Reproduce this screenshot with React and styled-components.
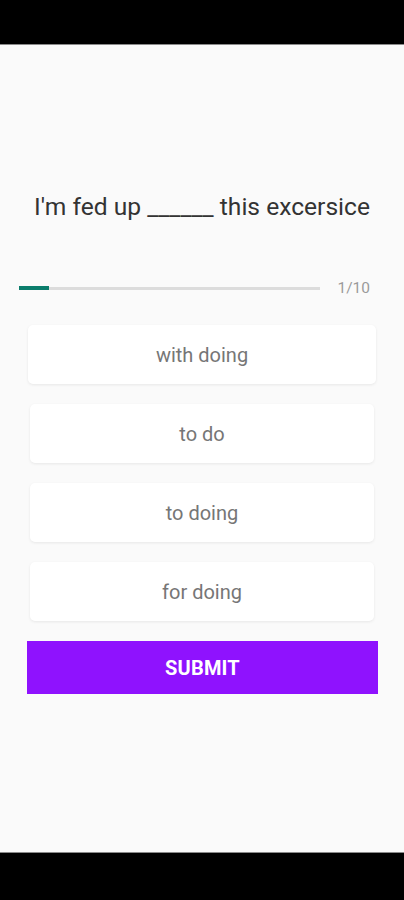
import React from "react";
import styled, { createGlobalStyle } from "styled-components";

const GlobalStyle = createGlobalStyle`
  html, body {
    margin: 0;
    padding: 0;
    background: #000;
  }
  * {
    box-sizing: border-box;
  }
`;

const Screen = styled.div`
  width: 404px;
  height: 900px;
  display: flex;
  flex-direction: column;
  font-family: Roboto, "Noto Sans", sans-serif;
  background: #000;
`;

const StatusBar = styled.div`
  height: 45px;
  background: #000;
  border-bottom: 1px solid #8a8a8a;
`;

const NavBar = styled.div`
  height: 48px;
  background: #000;
  border-top: 1px solid #8a8a8a;
`;

const Content = styled.div`
  flex: 1;
  background: #fafafa;
  display: flex;
  flex-direction: column;
  padding-top: 147px;
`;

const Question = styled.div`
  text-align: center;
  font-size: 24.6px;
  line-height: 30px;
  color: #333;
`;

const ProgressRow = styled.div`
  display: flex;
  align-items: center;
  margin-top: 57px;
  padding: 0 34px 0 19px;
`;

const Track = styled.div`
  flex: 1;
  height: 3px;
  background: #dcdcdc;
  position: relative;
  margin-right: 17px;
`;

const Fill = styled.div`
  position: absolute;
  left: 0;
  top: -1px;
  height: 4px;
  background: #0b7d6c;
`;

const Counter = styled.span`
  font-size: 15.5px;
  color: #9a9a9a;
`;

const Options = styled.div`
  display: flex;
  flex-direction: column;
  gap: 20px;
  margin-top: 28px;
  padding: 0 30px;
`;

const Option = styled.div`
  height: 59px;
  margin: 0 ${(p) => (p.$raised ? "-2px" : "0")};
  background: #fff;
  border-radius: 5px;
  box-shadow: 0 1px 3px rgba(0, 0, 0, 0.08);
  display: flex;
  align-items: center;
  justify-content: center;
  font-size: 20px;
  color: #767676;
`;

const Submit = styled.button`
  margin: 20px 26px 0 27px;
  height: 53px;
  border: none;
  background: #8f12fe;
  color: #fff;
  font-family: Roboto, "Noto Sans", sans-serif;
  font-weight: 700;
  font-size: 20px;
  letter-spacing: 0.2px;
`;

const options = ["with doing", "to do", "to doing", "for doing"];

export default function App() {
  return (
    <Screen>
      <GlobalStyle />
      <StatusBar />
      <Content>
        <Question>I'm fed up ______ this excersice</Question>
        <ProgressRow>
          <Track>
            <Fill style={{ width: `${(1 / 10) * 100}%` }} />
          </Track>
          <Counter>1/10</Counter>
        </ProgressRow>
        <Options>
          {options.map((o, i) => (
            <Option key={o} $raised={i === 0}>
              {o}
            </Option>
          ))}
        </Options>
        <Submit>SUBMIT</Submit>
      </Content>
      <NavBar />
    </Screen>
  );
}
